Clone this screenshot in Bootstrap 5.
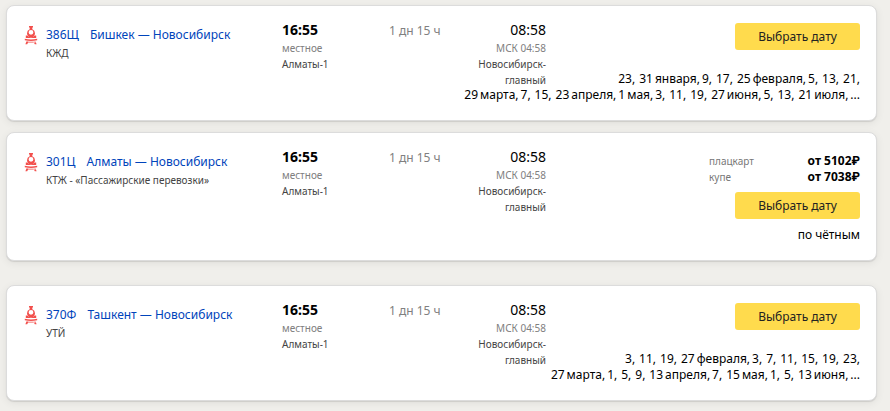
<!DOCTYPE html>
<html lang="ru">
<head>
<meta charset="utf-8">
<meta name="viewport" content="width=device-width, initial-scale=1">
<title>Поезда до Новосибирска</title>
<link href="https://cdn.jsdelivr.net/npm/bootstrap@5.3.0/dist/css/bootstrap.min.css" rel="stylesheet">
<style>
body{background:#f0efeb;font-family:"Noto Sans",sans-serif;font-size:12px;line-height:16px;color:#000}
.trips{padding:5px 13px 9px 6px}
.trip{border:1px solid #dcdcdc;border-radius:8px;box-shadow:0 2px 8px rgba(0,0,0,.07),0 1px 1px rgba(0,0,0,.1);margin-bottom:11px}
.trip-gap{margin-bottom:24px}
.trip-grid{display:grid;grid-template-columns:258fr 107fr 157fr 314fr;padding:17px 16px 17px 17px}
.trip-grid>*{grid-row:1;min-width:0}
.train{grid-column:1}
.depart{grid-column:2}
.travel{grid-column:3}
.side{grid-column:3/-1;white-space:nowrap}
.loco{width:14px;height:20px;margin:3px 8px 0 0;color:#f2504d}
.route{color:#04b;text-decoration:none;white-space:nowrap}
.number{margin-right:11px}
.route:hover{color:#c00}
.carrier{margin-top:2px}
.minor{font-size:10px;line-height:16px}
.place{color:#444}
.soft{color:#808080}
.clock{font-size:14px;line-height:14px;margin-bottom:3px}
.arrive{width:80px}
.pick{width:125px;height:27px;padding:0;border:0;border-radius:3px;background:#ffdb4d;color:#222;font-size:12px;line-height:27px}
.pick:hover{background:#ffd21f}
.days{margin-top:21px;line-height:16px}
.fares{width:151px;margin:3px 0 7px;line-height:16px}
.fares td,.fares th{padding:0}
.fares th{font-weight:400;font-size:10px;color:#777}
.rub{font-family:Roboto,sans-serif}
</style>
<script src="https://cdn.jsdelivr.net/npm/bootstrap@5.3.0/dist/js/bootstrap.bundle.min.js"></script>
</head>
<body>
<svg width="0" height="0" class="d-none" aria-hidden="true">
<symbol id="loco" viewBox="0 0 14 20">
<path fill="currentColor" fill-rule="evenodd" d="M5 0h4v1.400H8.300V3.200A4.300 4.300 0 0 1 11 7.200A4.200 4.200 0 0 1 9 11H5A4.200 4.200 0 0 1 3 7.200A4.300 4.300 0 0 1 5.700 3.200V1.400H5zM7 3.900a2.400 2.400 0 1 0 0 4.800a2.400 2.400 0 0 0 0-4.800z"/>
<path fill="currentColor" d="M1.800 9.400h1.600Q7 13.200 10.600 9.400h1.600V12H1.800zM.800 12.700Q7 14.300 13.200 12.700V14.200Q7 15.800.800 14.200zM2.500 15.200Q7 16.400 11.500 15.200V16.500h-9zM2.300 15.800h2.200L3.200 18.300H1.400zM11.700 15.800H9.500l1.300 2.500h1.800z"/>
</symbol>
</svg>
<main class="trips">
<article class="trip bg-white">
<div class="trip-grid">
<div class="train d-flex"><svg class="loco flex-shrink-0" aria-hidden="true"><use href="#loco"/></svg><div class="pt-1"><a class="route" href="#"><span class="number">386Щ</span>Бишкек — Новосибирск</a><div class="minor place carrier">КЖД</div></div></div>
<div class="depart"><div class="clock fw-bold">16:55</div><div class="minor soft">местное</div><div class="minor place">Алматы-1</div></div>
<div class="travel d-flex justify-content-between"><div class="soft">1 дн 15 ч</div><div class="arrive text-end"><div class="clock">08:58</div><div class="minor soft">МСК 04:58</div><div class="minor place">Новосибирск-главный</div></div></div>
<div class="side text-end"><button type="button" class="btn pick d-block ms-auto">Выбрать дату</button><div class="days">23,&#8196;31&#8201;января,&#8201;9,&#8196;17,&#8196;25&#8201;февраля,&#8201;5,&#8196;13,&#8196;21,<br>29&#8201;марта,&#8201;7,&#8196;15,&#8196;23&#8201;апреля,&#8201;1&#8201;мая,&#8201;3,&#8196;11,&#8196;19,&#8196;27&#8201;июня,&#8201;5,&#8196;13,&#8196;21&#8201;июля,&#8201;...</div></div>
</div>
</article>
<article class="trip trip-gap bg-white">
<div class="trip-grid">
<div class="train d-flex"><svg class="loco flex-shrink-0" aria-hidden="true"><use href="#loco"/></svg><div class="pt-1"><a class="route" href="#"><span class="number">301Ц</span>Алматы — Новосибирск</a><div class="minor place carrier">КТЖ - «Пассажирские перевозки»</div></div></div>
<div class="depart"><div class="clock fw-bold">16:55</div><div class="minor soft">местное</div><div class="minor place">Алматы-1</div></div>
<div class="travel d-flex justify-content-between"><div class="soft">1 дн 15 ч</div><div class="arrive text-end"><div class="clock">08:58</div><div class="minor soft">МСК 04:58</div><div class="minor place">Новосибирск-главный</div></div></div>
<div class="side text-end"><table class="fares ms-auto"><tbody><tr><th scope="row" class="text-start">плацкарт</th><td class="fw-bold">от 5102<span class="rub">₽</span></td></tr><tr><th scope="row" class="text-start">купе</th><td class="fw-bold">от 7038<span class="rub">₽</span></td></tr></tbody></table><button type="button" class="btn pick d-block ms-auto">Выбрать дату</button><div class="mt-2">по чётным</div></div>
</div>
</article>
<article class="trip mb-0 bg-white">
<div class="trip-grid">
<div class="train d-flex"><svg class="loco flex-shrink-0" aria-hidden="true"><use href="#loco"/></svg><div class="pt-1"><a class="route" href="#"><span class="number">370Ф</span>Ташкент — Новосибирск</a><div class="minor place carrier">УТЙ</div></div></div>
<div class="depart"><div class="clock fw-bold">16:55</div><div class="minor soft">местное</div><div class="minor place">Алматы-1</div></div>
<div class="travel d-flex justify-content-between"><div class="soft">1 дн 15 ч</div><div class="arrive text-end"><div class="clock">08:58</div><div class="minor soft">МСК 04:58</div><div class="minor place">Новосибирск-главный</div></div></div>
<div class="side text-end"><button type="button" class="btn pick d-block ms-auto">Выбрать дату</button><div class="days">3,&#8196;11,&#8196;19,&#8196;27&#8201;февраля,&#8201;3,&#8196;7,&#8196;11,&#8196;15,&#8196;19,&#8196;23,<br>27&#8201;марта,&#8201;1,&#8196;5,&#8196;9,&#8196;13&#8201;апреля,&#8201;7,&#8196;15&#8201;мая,&#8201;1,&#8196;5,&#8196;13&#8201;июня,&#8201;...</div></div>
</div>
</article>
</main>
</body>
</html>
